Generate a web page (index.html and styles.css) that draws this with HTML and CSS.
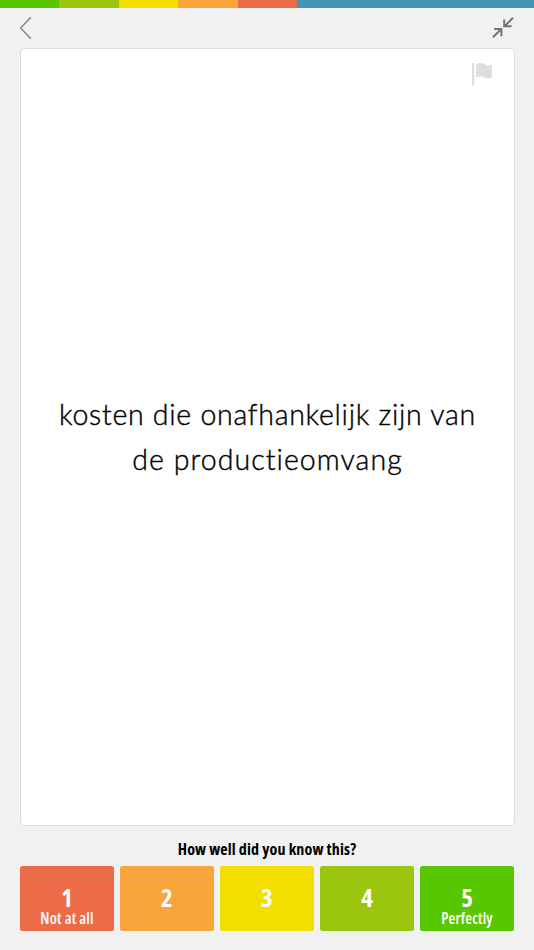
FILE: index.html
```html
<!DOCTYPE html>
<html lang="nl">
<head>
  <meta charset="UTF-8">
  <title>Flashcards</title>
  <meta name="viewport" content="width=device-width, initial-scale=1">
  <link rel="stylesheet" href="styles.css">
</head>
<body>
  <div class="progress">
    <div class="segment level-5"></div>
    <div class="segment level-4"></div>
    <div class="segment level-3"></div>
    <div class="segment level-2"></div>
    <div class="segment level-1"></div>
    <div class="segment rest"></div>
  </div>
  <div class="toolbar">
    <svg class="back" width="14" height="24" viewBox="0 0 14 24">
      <path d="M11.8 1.4 L1.6 12 L11.8 22.6" fill="none" stroke="#8e8e8e" stroke-width="1.6"/>
    </svg>
    <svg class="shrink" width="22" height="22" viewBox="0 0 22 22">
      <path d="M21 0.8 L13 8.8 M12.2 2.4 V9.2 H19.6 M1 20.2 L9 12.2 M2.2 12 H9.4 V19.2" fill="none" stroke="#747474" stroke-width="2"/>
    </svg>
  </div>
  <div class="card">
    <svg class="flag" width="21" height="24" viewBox="0 0 21 24">
      <path d="M0 1 H2.3 V23.6 H0 Z M4 2.4 C7 0.4 10 0.6 12.5 2.2 C15 3.8 17.5 3.8 20 2.2 V14.8 C17.5 17 15 17 12.5 15.4 C10 13.8 7 14 4 15.8 Z" fill="#dedede"/>
    </svg>
    <div class="question">
      <span class="line line-1">kosten die onafhankelijk zijn van</span>
      <span class="line line-2">de productieomvang</span>
    </div>
  </div>
  <div class="prompt"><span>How well did you know this?</span></div>
  <div class="ratings">
    <button class="rating level-1"><b>1</b><span>Not at all</span></button>
    <button class="rating level-2"><b>2</b></button>
    <button class="rating level-3"><b>3</b></button>
    <button class="rating level-4"><b>4</b></button>
    <button class="rating level-5"><b>5</b><span>Perfectly</span></button>
  </div>
</body>
</html>
```
FILE: styles.css
```css
body {
  margin: 0;
  height: 950px;
  background: #f1f1f1;
  font-family: "Open Sans", "Noto Sans", sans-serif;
  color: #000;
  overflow: hidden;
  display: flex;
  flex-direction: column;
}
.progress {
  display: flex;
  height: 8px;
}
.segment {
  width: 59.4px;
}
.segment.rest {
  flex: 1;
  background: #4495b7;
}
.level-1 {
  background: #ec6c4a;
}
.level-2 {
  background: #faa53b;
}
.level-3 {
  background: #f2df00;
}
.level-4 {
  background: #9bc60f;
}
.level-5 {
  background: #59c700;
}
.toolbar {
  display: flex;
  justify-content: space-between;
  height: 40px;
  padding: 0 20px 0 19px;
  box-sizing: border-box;
}
.back {
  margin-top: 8px;
}
.shrink {
  margin-top: 9px;
}
.card {
  display: flex;
  flex-direction: column;
  height: 778px;
  margin: 0 19px 0 20px;
  border: 1px solid #dcdcdc;
  border-radius: 5px;
  background: #fff;
  box-sizing: border-box;
}
.flag {
  align-self: flex-end;
  flex: none;
  margin: 13px 21px 0 0;
}
.question {
  display: flex;
  flex-direction: column;
  align-items: center;
  margin-top: 306px;
  font-family: Lato, sans-serif;
  font-size: 28.5px;
  font-weight: 300;
  line-height: 45px;
  white-space: nowrap;
  -webkit-text-stroke: 0.4px #000;
}
.line-1 {
  letter-spacing: 0.73px;
}
.line-2 {
  letter-spacing: 1.05px;
}
.prompt {
  height: 40px;
  line-height: 47px;
  text-align: center;
  font-size: 16px;
  font-weight: 700;
  font-stretch: 75%;
  letter-spacing: 0.15px;
}
.ratings {
  display: flex;
  gap: 5.3px;
  height: 64.5px;
  padding: 0 19.6px;
}
.rating {
  flex: 1;
  display: flex;
  flex-direction: column;
  align-items: center;
  border: none;
  border-radius: 2.5px;
  padding: 19px 0 0;
  color: #fff;
  font-family: inherit;
  font-stretch: 75%;
}
.rating b {
  font-size: 25px;
  line-height: 24px;
}
.rating span {
  margin-top: 1px;
  font-size: 15.5px;
  font-weight: 600;
  line-height: 17px;
  letter-spacing: 0.2px;
}
```
